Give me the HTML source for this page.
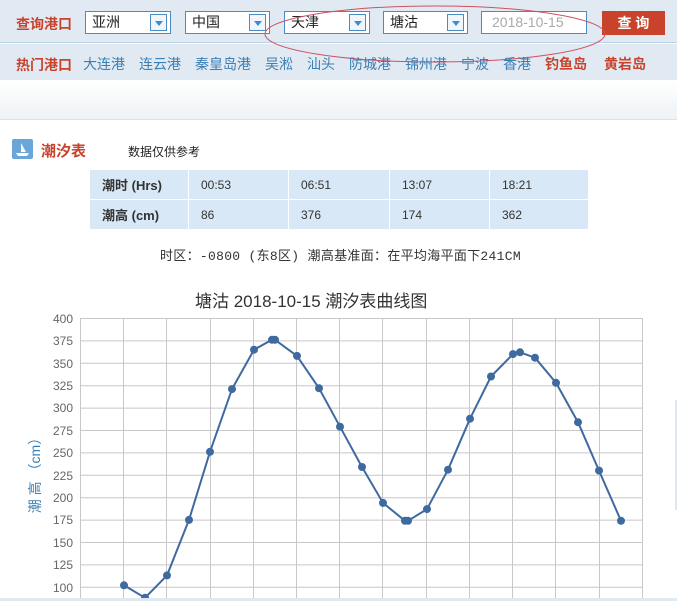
<!DOCTYPE html>
<html><head><meta charset="utf-8"><style>
*{margin:0;padding:0;box-sizing:border-box}
body{width:677px;height:601px;overflow:hidden;background:#fff;font-family:"Liberation Sans","Noto Sans CJK SC",sans-serif;position:relative}
.a{position:absolute}
.top{left:0;top:0;width:677px;height:43px;background:#e1eaf2;border-bottom:1px solid #b9d3e6}
.hot{left:0;top:44px;width:677px;height:36px;background:#e1eaf2}
.grad{left:0;top:80px;width:677px;height:40px;background:linear-gradient(#fff,#eef2f6);border-bottom:1px solid #d8e2ea}
.sel{height:23px;top:11px;background:#fff;border:1px solid #4a8cc0;font-size:14px;line-height:21px;padding-left:6px;color:#222}
.sel i{position:absolute;right:3px;top:2px;width:17px;height:17px;border:1px solid #4a8cc0;background:#f0f6fb}
.sel i:after{content:"";position:absolute;left:4px;top:6px;border-left:4px solid transparent;border-right:4px solid transparent;border-top:5px solid #3c8dcc}
.red{color:#c9432c;font-weight:bold;font-size:14px}
.lk{color:#3a7fb5;font-size:14px;top:54px}
td{border:1px solid #fff;font-size:12px;padding-left:12px;height:30px;color:#333;background:#d8e8f6}
</style></head><body>
<div class="a top"></div>
<div class="a hot"></div>
<div class="a grad"></div>
<div class="a red" style="left:16px;top:14px">查询港口</div>
<div class="a sel" style="left:85px;width:86px">亚洲<i></i></div>
<div class="a sel" style="left:185px;width:85px">中国<i></i></div>
<div class="a sel" style="left:284px;width:86px">天津<i></i></div>
<div class="a sel" style="left:383px;width:85px">塘沽<i></i></div>
<div class="a sel" style="left:481px;width:106px;color:#aaa;padding-left:10px">2018-10-15</div>
<div class="a" style="left:602px;top:11px;width:63px;height:24px;background:#c9432c;color:#fff;font-weight:bold;font-size:14px;text-align:center;line-height:24px">查 询</div>
<svg class="a" style="left:255px;top:2px" width="360" height="70"><ellipse cx="180" cy="32" rx="170" ry="28" fill="none" stroke="#d05060" stroke-width="1"/></svg>
<div class="a red" style="left:16px;top:55px">热门港口</div>
<div class="a lk" style="left:83px">大连港</div>
<div class="a lk" style="left:139px">连云港</div>
<div class="a lk" style="left:195px">秦皇岛港</div>
<div class="a lk" style="left:265px">吴淞</div>
<div class="a lk" style="left:307px">汕头</div>
<div class="a lk" style="left:349px">防城港</div>
<div class="a lk" style="left:405px">锦州港</div>
<div class="a lk" style="left:461px">宁波</div>
<div class="a lk" style="left:503px">香港</div>
<div class="a red" style="left:545px;top:54px">钓鱼岛</div>
<div class="a red" style="left:604px;top:54px">黄岩岛</div>
<div class="a" style="left:12px;top:139px;width:21px;height:20px;background:#6aa6d8;border-radius:2px"><svg width="21" height="20"><path d="M9 4v9h5z" fill="#fff"/><path d="M4 14h13l-2 3H6z" fill="#fff"/></svg></div>
<div class="a red" style="left:41px;top:140px;font-size:15px">潮汐表</div>
<div class="a" style="left:128px;top:143px;font-size:12px;color:#222">数据仅供参考</div>
<table class="a" style="left:89px;top:169px;width:500px;border-collapse:collapse">
<tr><td style="width:99px;font-weight:bold;font-size:13px">潮时 (Hrs)</td><td style="width:100px">00:53</td><td style="width:101px">06:51</td><td style="width:100px">13:07</td><td>18:21</td></tr>
<tr><td style="font-weight:bold;font-size:13px">潮高 (cm)</td><td>86</td><td>376</td><td>174</td><td>362</td></tr>
</table>
<div class="a" style="left:160px;top:245px;font-size:13px;letter-spacing:0.3px;color:#333;font-family:'Liberation Mono','Noto Sans CJK SC',monospace;white-space:nowrap">时区：-0800 (东8区) 潮高基准面：在平均海平面下241CM</div>
<div class="a" style="left:195px;top:287px;font-size:17px;color:#333;white-space:nowrap">塘沽 2018-10-15 潮汐表曲线图</div>
<svg class="a" style="left:0;top:300px" width="677" height="301">
<g stroke="#c8c8c8" stroke-width="1" fill="none" transform="translate(0,-300)">
<path d="M80 318.5H643M80 340.9H643M80 363.3H643M80 385.7H643M80 408.1H643M80 430.5H643M80 452.9H643M80 475.3H643M80 497.7H643M80 520.1H643M80 542.5H643M80 564.9H643M80 587.3H643"/>
<path d="M80.5 318V601M123.5 318V601M166.5 318V601M210.5 318V601M253.5 318V601M296.5 318V601M339.5 318V601M382.5 318V601M426.5 318V601M469.5 318V601M512.5 318V601M555.5 318V601M599.5 318V601M642.5 318V601"/>
</g>
<g font-size="12" fill="#666" text-anchor="end" transform="translate(0,-300)">
<text x="73" y="323">400</text><text x="73" y="345">375</text><text x="73" y="368">350</text><text x="73" y="390">325</text><text x="73" y="412">300</text><text x="73" y="435">275</text><text x="73" y="457">250</text><text x="73" y="480">225</text><text x="73" y="502">200</text><text x="73" y="524">175</text><text x="73" y="547">150</text><text x="73" y="569">125</text><text x="73" y="592">100</text>
</g>
<text transform="translate(40,172) rotate(-90)" font-size="14" fill="#3a7fb5" text-anchor="middle">潮 高 （cm）</text>
<g transform="translate(0,-300)">
<polyline fill="none" stroke="#3f6aa0" stroke-width="2" stroke-linejoin="round" points="124,585.3 145,597.8 167,575.4 189,519.9 210,451.8 232,389.1 254,349.7 272,339.8 275,339.8 297,355.9 319,388.2 340,426.7 362,467 383,502.9 405,520.8 408,520.8 427,509.1 448,469.7 470,418.7 491,376.5 513,354.1 520,352.3 535,357.7 556,382.8 578,422.2 599,470.6 621,520.8"/>
<g fill="#3f6aa0">
<circle cx="124" cy="585.3" r="4"/><circle cx="145" cy="597.8" r="4"/><circle cx="167" cy="575.4" r="4"/><circle cx="189" cy="519.9" r="4"/><circle cx="210" cy="451.8" r="4"/><circle cx="232" cy="389.1" r="4"/><circle cx="254" cy="349.7" r="4"/><circle cx="272" cy="339.8" r="4"/><circle cx="275" cy="339.8" r="4"/><circle cx="297" cy="355.9" r="4"/><circle cx="319" cy="388.2" r="4"/><circle cx="340" cy="426.7" r="4"/><circle cx="362" cy="467" r="4"/><circle cx="383" cy="502.9" r="4"/><circle cx="405" cy="520.8" r="4"/><circle cx="408" cy="520.8" r="4"/><circle cx="427" cy="509.1" r="4"/><circle cx="448" cy="469.7" r="4"/><circle cx="470" cy="418.7" r="4"/><circle cx="491" cy="376.5" r="4"/><circle cx="513" cy="354.1" r="4"/><circle cx="520" cy="352.3" r="4"/><circle cx="535" cy="357.7" r="4"/><circle cx="556" cy="382.8" r="4"/><circle cx="578" cy="422.2" r="4"/><circle cx="599" cy="470.6" r="4"/><circle cx="621" cy="520.8" r="4"/>
</g></g>
</svg>
<div class="a" style="left:0;top:598px;width:677px;height:3px;background:#dfe9f2"></div>
<div class="a" style="left:675px;top:400px;width:2px;height:110px;background:#dde8f2"></div>
</body></html>
